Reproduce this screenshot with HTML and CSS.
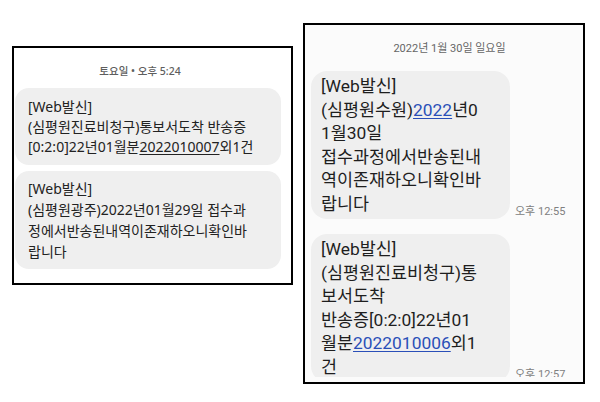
FILE: index.html
```html
<!DOCTYPE html>
<html lang="ko">
<head>
<meta charset="UTF-8">
<meta name="viewport" content="width=device-width, initial-scale=1.0">
<title>문자 메시지</title>
<link rel="stylesheet" href="styles.css">
</head>
<body>
<div class="page">
    <section class="shot shot-left">
        <div class="day">토요일 • 오후 5:24</div>
        <div class="bubble b1">
            [Web발신]<br>
            (심평원진료비청구)통보서도착 반송증<br>
            [0:2:0]22년01월분<u>2022010007</u>외1건
        </div>
        <div class="bubble b2">
            [Web발신]<br>
            (심평원광주)2022년01월29일 접수과<br>
            정에서반송된내역이존재하오니확인바<br>
            랍니다
        </div>
    </section>

    <section class="shot shot-right">
        <div class="thread">
            <div class="day">2022년 1월 30일 일요일</div>
            <div class="msg">
                <div class="bubble">
                    [Web발신]<br>
                    (심평원수원)<a href="#">2022</a>년0<br>
                    1월30일<br>
                    접수과정에서반송된내<br>
                    역이존재하오니확인바<br>
                    랍니다
                </div>
                <span class="time">오후 12:55</span>
            </div>
            <div class="msg">
                <div class="bubble">
                    [Web발신]<br>
                    (심평원진료비청구)통<br>
                    보서도착<br>
                    반송증[0:2:0]22년01<br>
                    월분<a href="#">2022010006</a>외1<br>
                    건
                </div>
                <span class="time">오후 12:57</span>
            </div>
        </div>
    </section>
</div>
</body>
</html>
```

FILE: styles.css
```css
body {
    margin: 0;
    background: #fff;
    color: #1e1e1e;
    font-family: "Noto Sans", "Noto Sans CJK KR", sans-serif;
}
.page {
    display: flex;
    align-items: flex-start;
    gap: 10px;
    padding: 23px 0 0 12px;
}
.shot {
    box-sizing: border-box;
    border: 2px solid #000;
}

/* left capture */
.shot-left {
    width: 281px;
    height: 239px;
    margin-top: 23px;
    background: #fff;
}
.shot-left .day {
    padding: 15px 25px 0 0;
    line-height: 16px;
    font-size: 10.5px;
    font-weight: 500;
    color: #5e5e5e;
    text-align: center;
    margin-bottom: 9px;
}
.shot-left .bubble {
    width: 266px;
    box-sizing: border-box;
    margin-left: 1px;
    padding: 9px 13px 8px;
    background: #efefef;
    border-radius: 14px;
    font-size: 14px;
    line-height: 20px;
    color: #222;
    white-space: nowrap;
}
.shot-left .b2 {
    margin-top: 6px;
    padding: 7px 13px;
    line-height: 21px;
}
.shot-left u {
    text-underline-offset: 2px;
}

/* right capture */
.shot-right {
    width: 282px;
    height: 361px;
    padding-bottom: 4px;
    background: #fbfbfb;
}
.thread {
    height: 352px;
    overflow: hidden;
    font-family: Roboto, "Noto Sans CJK KR", sans-serif;
}
.shot-right .day {
    padding: 16px 0 0 11px;
    line-height: 16px;
    font-size: 11px;
    color: #666;
    text-align: center;
    margin-bottom: 14px;
}
.msg {
    display: flex;
    align-items: flex-end;
    gap: 5px;
    margin-left: 6px;
    margin-bottom: 15px;
}
.shot-right .bubble {
    width: 199px;
    box-sizing: border-box;
    padding: 4px 10px 3px;
    background: #efefef;
    border-radius: 16px;
    font-size: 17.4px;
    line-height: 23.5px;
    white-space: nowrap;
}
.shot-right a {
    color: #2a4fb8;
    text-underline-offset: 2px;
}
.time {
    font-size: 11px;
    line-height: 14px;
    color: #808080;
    white-space: nowrap;
}
```
